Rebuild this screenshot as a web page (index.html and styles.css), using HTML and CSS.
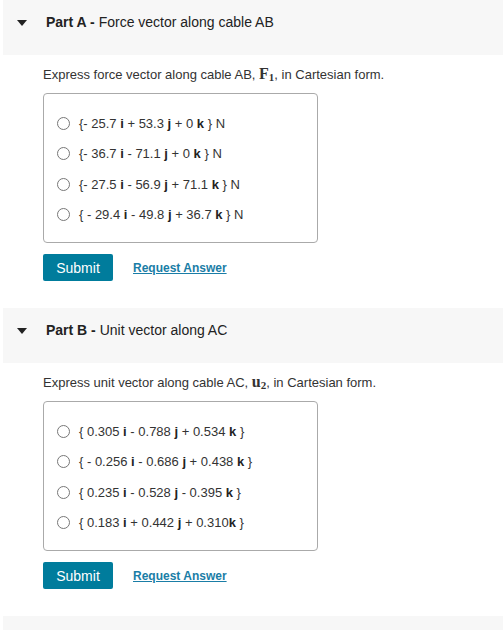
FILE: index.html
```
<!DOCTYPE html>
<html lang="en">
<head>
    <meta charset="UTF-8">
    <meta name="viewport" content="width=device-width, initial-scale=1.0">
    <title>Parts</title>
    <link rel="stylesheet" href="styles.css">
</head>
<body>
    <div class="part">
        <div class="part-header">
            <span class="caret"></span>
            <span class="part-title"><b>Part A -</b> Force vector along cable AB</span>
        </div>
        <div class="part-body">
            <p class="question">Express force vector along cable AB, <span class="math">F<sub>1</sub></span>, in Cartesian form.</p>
            <div class="choices">
                <label class="choice"><span class="radio"></span>{- 25.7 <b>i</b> + 53.3 <b>j</b> + 0 <b>k</b> } N</label>
                <label class="choice"><span class="radio"></span>{- 36.7 <b>i</b> - 71.1 <b>j</b> + 0 <b>k</b> } N</label>
                <label class="choice"><span class="radio"></span>{- 27.5 <b>i</b> - 56.9 <b>j</b> + 71.1 <b>k</b> } N</label>
                <label class="choice"><span class="radio"></span>{ - 29.4 <b>i</b> - 49.8 <b>j</b> + 36.7 <b>k</b> } N</label>
            </div>
            <div class="actions">
                <button class="submit">Submit</button>
                <a class="request" href="#">Request Answer</a>
            </div>
        </div>
    </div>

    <div class="part">
        <div class="part-header">
            <span class="caret"></span>
            <span class="part-title"><b>Part B -</b> Unit vector along AC</span>
        </div>
        <div class="part-body">
            <p class="question">Express unit vector along cable AC, <span class="math">u<sub>2</sub></span>, in Cartesian form.</p>
            <div class="choices">
                <label class="choice"><span class="radio"></span>{ 0.305 <b>i</b> - 0.788 <b>j</b> + 0.534 <b>k</b> }</label>
                <label class="choice"><span class="radio"></span>{ - 0.256 <b>i</b> - 0.686 <b>j</b> + 0.438 <b>k</b> }</label>
                <label class="choice"><span class="radio"></span>{ 0.235 <b>i</b> - 0.528 <b>j</b> - 0.395 <b>k</b> }</label>
                <label class="choice"><span class="radio"></span>{ 0.183 <b>i</b> + 0.442 <b>j</b> + 0.310<b>k</b> }</label>
            </div>
            <div class="actions">
                <button class="submit">Submit</button>
                <a class="request" href="#">Request Answer</a>
            </div>
        </div>
    </div>

    <div class="part">
        <div class="part-header"></div>
    </div>
</body>
</html>
```

FILE: styles.css
```
body {
    margin: 0;
    font-family: "Liberation Sans", Arial, sans-serif;
    color: #333;
    background: #fff;
}
.part {
    margin-left: 3px;
    margin-bottom: 27px;
}
.part-header {
    height: 55px;
    box-sizing: border-box;
    background-color: #f7f7f7;
    display: flex;
    align-items: flex-start;
    padding: 14px 0 0 14px;
}
.caret {
    width: 0;
    height: 0;
    margin-top: 6px;
    border-left: 5px solid transparent;
    border-right: 5px solid transparent;
    border-top: 6px solid #222;
}
.part-title {
    margin-left: 19px;
    font-size: 14px;
    line-height: 16px;
    color: #222;
}
.part-body {
    padding-left: 40px;
}
.question {
    height: 16px;
    margin: 11px 0 11px;
    font-size: 13px;
    line-height: 16px;
}
.math {
    font-family: "Liberation Serif", "Times New Roman", serif;
    font-weight: bold;
    font-size: 16px;
    line-height: 1;
}
.math sub {
    font-size: 11px;
    line-height: 1;
    vertical-align: -2px;
}
.choices {
    width: 275px;
    height: 150px;
    box-sizing: border-box;
    border: 1px solid #aaa;
    border-radius: 4px;
    padding: 14px 0 0 13px;
}
.choice {
    display: flex;
    align-items: center;
    height: 30.5px;
    font-size: 13px;
    color: #333;
    white-space: pre;
}
.choice b {
    color: #222;
}
.radio {
    width: 11px;
    height: 11px;
    border: 1px solid #777;
    border-radius: 50%;
    margin-right: 9px;
}
.actions {
    display: flex;
    align-items: center;
    margin-top: 11px;
}
.submit {
    width: 70px;
    height: 27px;
    padding: 0;
    border: none;
    border-radius: 2px;
    background-color: #007c9c;
    color: #fff;
    font-family: "Liberation Sans", Arial, sans-serif;
    font-size: 14px;
}
.request {
    margin-left: 20px;
    font-size: 12px;
    font-weight: bold;
    color: #1a7da6;
    text-decoration: underline;
}
```
